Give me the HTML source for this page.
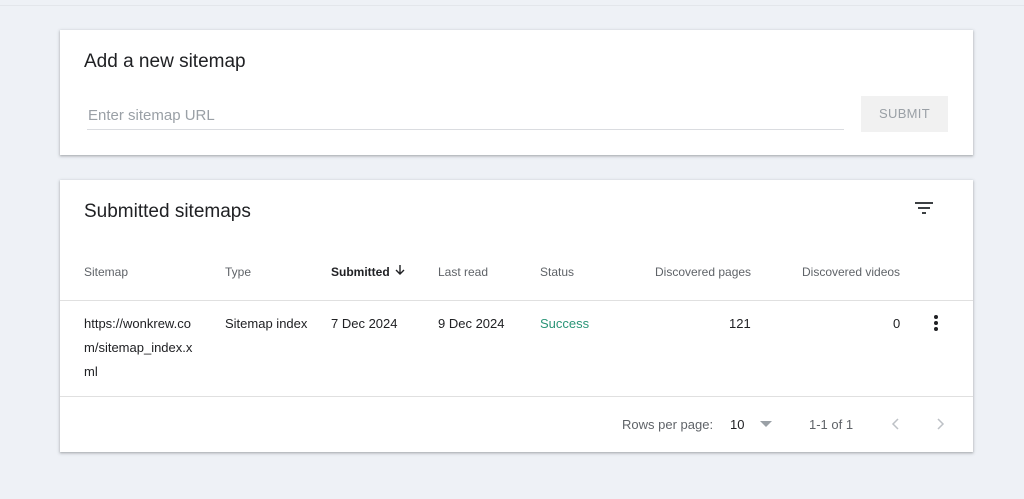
<!DOCTYPE html>
<html><head><style>
body{margin:0;width:1024px;height:499px;background:#eef1f6;font-family:"Liberation Sans",Arial,sans-serif;position:relative;overflow:hidden;color:#202124}
.topline{position:absolute;left:0;top:0;width:1024px;height:5px;border-bottom:1px solid #e3e6eb;background:#eef1f6}
.card{position:absolute;left:60px;width:913px;background:#fff;box-shadow:0 1px 2px rgba(60,64,67,.3),0 1px 3px 1px rgba(60,64,67,.12)}
.a{position:absolute;white-space:nowrap}
.h{font-size:12px;color:#5f6368}
.c{font-size:13px;color:#202124}
</style></head><body>
<div class="topline"></div>
<div class="card" style="top:30px;height:125px">
 <div class="a" style="left:24px;top:21px;font-size:19px;color:#202124">Add a new sitemap</div>
 <div class="a" style="left:28px;top:77px;font-size:15px;color:#9aa0a6">Enter sitemap URL</div>
 <div class="a" style="left:27px;top:99px;width:757px;height:1px;background:#dadce0"></div>
 <div class="a" style="left:801px;top:66px;width:87px;height:36px;background:#f1f1f1;color:#9aa0a6;font-size:13px;line-height:36px;text-align:center;letter-spacing:.3px">SUBMIT</div>
</div>
<div class="card" style="top:180px;height:272px">
 <div class="a" style="left:24px;top:21px;font-size:19px">Submitted sitemaps</div>
 <svg class="a" style="left:855px;top:22px" width="18" height="14" viewBox="0 0 18 14"><rect x="0" y="0" width="18" height="2" fill="#3c4043"/><rect x="3" y="5" width="12" height="2" fill="#3c4043"/><rect x="7" y="10" width="4" height="2" fill="#3c4043"/></svg>
 <div class="a h" style="left:24px;top:85px">Sitemap</div>
 <div class="a h" style="left:165px;top:85px">Type</div>
 <div class="a h" style="left:271px;top:85px;color:#202124;font-weight:bold">Submitted</div>
 <svg class="a" style="left:334px;top:84px" width="12" height="12" viewBox="0 0 12 12"><path d="M6 1v9M2 6l4 4 4-4" stroke="#202124" stroke-width="1.4" fill="none"/></svg>
 <div class="a h" style="left:378px;top:85px">Last read</div>
 <div class="a h" style="left:480px;top:85px">Status</div>
 <div class="a h" style="left:595px;top:85px">Discovered pages</div>
 <div class="a h" style="left:742px;top:85px">Discovered videos</div>
 <div class="a" style="left:0;top:120px;width:913px;height:1px;background:#e0e0e0"></div>
 <div class="a c" style="left:24px;top:132px;line-height:24px;white-space:normal;width:120px">https://wonkrew.co<br>m/sitemap_index.x<br>ml</div>
 <div class="a c" style="left:165px;top:136px">Sitemap index</div>
 <div class="a c" style="left:271px;top:136px">7 Dec 2024</div>
 <div class="a c" style="left:378px;top:136px">9 Dec 2024</div>
 <div class="a c" style="left:480px;top:136px;color:#2a9577">Success</div>
 <div class="a c" style="left:669px;top:136px">121</div>
 <div class="a c" style="left:833px;top:136px">0</div>
 <svg class="a" style="left:873px;top:134px" width="6" height="18" viewBox="0 0 6 18"><circle cx="3" cy="3" r="2" fill="#202124"/><circle cx="3" cy="9" r="2" fill="#202124"/><circle cx="3" cy="15" r="2" fill="#202124"/></svg>
 <div class="a" style="left:0;top:216px;width:913px;height:1px;background:#e0e0e0"></div>
 <div class="a c" style="left:562px;top:237px;color:#5f6368">Rows per page:</div>
 <div class="a c" style="left:670px;top:237px">10</div>
 <svg class="a" style="left:700px;top:241px" width="12" height="6"><path d="M0 0h12L6 6z" fill="#9aa0a6"/></svg>
 <div class="a c" style="left:749px;top:237px;color:#5f6368">1-1 of 1</div>
 <svg class="a" style="left:831px;top:237px" width="10" height="14"><path d="M7 2L2 7l5 5" stroke="#bdc1c6" stroke-width="1.5" fill="none"/></svg>
 <svg class="a" style="left:875px;top:237px" width="10" height="14"><path d="M3 2l5 5-5 5" stroke="#bdc1c6" stroke-width="1.5" fill="none"/></svg>
</div>
</body></html>
